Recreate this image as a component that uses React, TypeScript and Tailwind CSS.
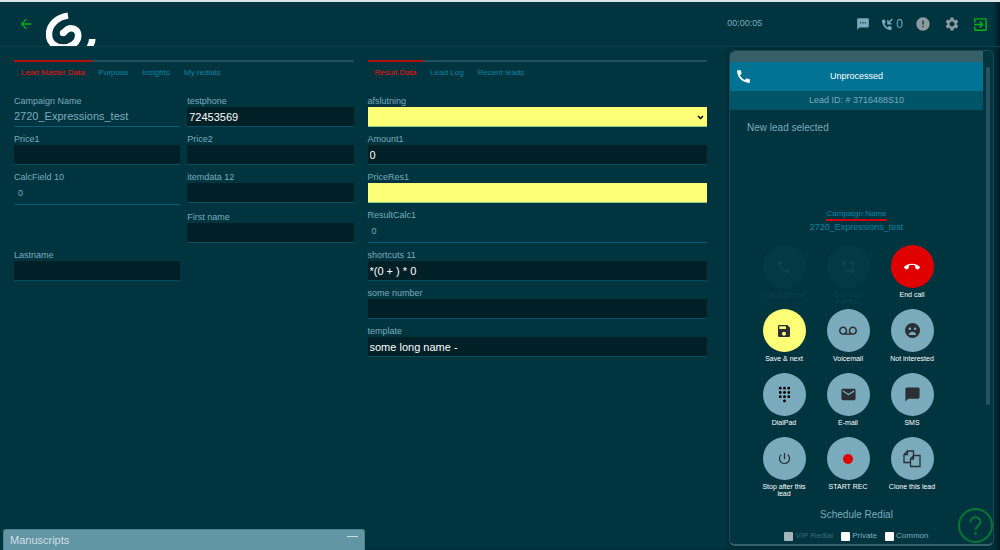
import type { ReactNode } from 'react'
import {
  MdArrowBack, MdCall, MdCallEnd, MdChatBubble, MdDialpad, MdEmail, MdError, MdExitToApp,
  MdPhoneForwarded, MdPowerSettingsNew, MdSave, MdSettings, MdTextsms, MdVoicemail,
} from 'react-icons/md'

type FieldProps = {
  id: string
  label: string
  value?: string
  required?: boolean
}

function Logo() {
  return (
    <svg width="52" height="34" viewBox="0 0 52 34" fill="none" stroke="white" strokeWidth="6.5" aria-label="Logo">
      <path d="M22 3.6C11 5 3 13 3 22.500C3 31 9.500 35.500 17 35.500C25.500 35.500 32.200 30.500 32.200 23.500C32.200 19 29 16.200 25 16.200C20.500 16.200 19.500 19.500 17.200 21" />
      <circle cx="17" cy="21" r="3.2" fill="white" stroke="none" />
      <path d="M43 27H49.500C49.500 30 48.500 32.500 47 35H40C41.800 32 42.800 30 43 27Z" fill="white" stroke="none" />
    </svg>
  )
}

function IncomingCallIcon() {
  return (
    <svg width="12" height="13" viewBox="0 0 24 24" fill="currentColor" preserveAspectRatio="none">
      <path d="M20 15.500c-1.250 0-2.450-.2-3.570-.57-.35-.11-.74-.03-1.020.24l-2.200 2.200c-2.830-1.440-5.150-3.750-6.590-6.590l2.200-2.210c.28-.26.36-.65.25-1C8.700 6.450 8.500 5.250 8.500 4c0-.55-.45-1-1-1H3c-.55 0-1 .45-1 1 0 9.940 8.060 18 18 18 .55 0 1-.45 1-1v-4.500c0-.55-.45-1-1-1z" />
      <path d="M21.500 1L23.500 3L17.200 9.300H21V12H12.500V3.500H15.200V7.300Z" />
    </svg>
  )
}

function SadFaceIcon() {
  return (
    <svg width="15" height="15" viewBox="0 0 20 20" fill="currentColor">
      <path
        fillRule="evenodd"
        d="M10 0A10 10 0 1 0 10 20A10 10 0 1 0 10 0ZM6.500 6A1.700 1.700 0 1 1 6.500 9.400A1.700 1.700 0 1 1 6.500 6ZM13.500 6A1.700 1.700 0 1 1 13.500 9.400A1.700 1.700 0 1 1 13.500 6ZM4.900 16C5.700 13.500 7.700 11.800 10 11.800C12.300 11.800 14.300 13.500 15.100 16Z"
      />
    </svg>
  )
}

function CloneIcon() {
  return (
    <svg width="18" height="18" viewBox="0 0 18 18" fill="none" stroke="#2b2f33" strokeWidth="1.3">
      <path d="M7 12.500H1V4.500L4.500 1H10.500V5M4.500 1V4.500H1" />
      <path d="M10.500 5.500H17V16.500H7.500V9L10.500 5.500ZM10.500 5.500V9H7.500" />
    </svg>
  )
}

function Tabs({ items }: { items: string[] }) {
  return (
    <nav className="flex border-t-2 border-[#22505a] text-[8px] leading-[10px]">
      {items.map((item, i) => (
        <button
          key={item}
          className={`-mt-0.5 border-t-2 px-[7px] pt-[6px] pb-[17px] ${
            i === 0 ? 'border-[#b80f10] text-[#f01008]' : 'border-transparent text-[#0084a6]'
          }`}
        >
          {item}
        </button>
      ))}
    </nav>
  )
}

function Field({ id, label, value = '', required }: FieldProps) {
  return (
    <div className="flex flex-col">
      <label htmlFor={id} className="h-3 text-[9px] leading-3">{label}</label>
      <input
        id={id}
        defaultValue={value}
        className={`h-5 w-full border-b px-0.5 text-[11px] text-white outline-none ${
          required ? 'border-[#8cc88c] bg-[#fdff76]' : 'border-[#005066] bg-[#002028]'
        }`}
      />
    </div>
  )
}

function CalcField({ label, value }: { label: string; value: string }) {
  return (
    <div>
      <div className="h-3 text-[9px] leading-3">{label}</div>
      <div className="h-[22px] border-b border-[#005c7a] px-1 text-[9px] leading-5">{value}</div>
    </div>
  )
}

type ActionProps = {
  icon: ReactNode
  label: string
  color?: string
  disabled?: boolean
}

function Action({ icon, label, color = 'bg-[#7aabbd] text-[#2b2f33]', disabled }: ActionProps) {
  return (
    <button
      disabled={disabled}
      className={`flex h-16 w-16 flex-col items-center gap-[3px] ${disabled ? 'text-[#0b414c]' : 'text-white'}`}
    >
      <span className={`flex size-[43px] shrink-0 items-center justify-center rounded-full text-[16px] ${color}`}>
        {icon}
      </span>
      <span className="w-12 text-center text-[7px] leading-[7px]">{label}</span>
    </button>
  )
}

const off = 'bg-[#033943] text-[#0b434e]'

const actions: ActionProps[] = [
  { label: 'Dial lead now', icon: <MdCall />, color: off, disabled: true },
  { label: 'Dial next number', icon: <MdPhoneForwarded />, color: off, disabled: true },
  { label: 'End call', icon: <MdCallEnd />, color: 'bg-[#e00000] text-white' },
  { label: 'Save & next', icon: <MdSave />, color: 'bg-[#fdff76] text-[#2b2f33]' },
  { label: 'Voicemail', icon: <MdVoicemail className="text-[18px]" /> },
  { label: 'Not interested', icon: <SadFaceIcon /> },
  { label: 'DialPad', icon: <MdDialpad className="text-[17px] text-black" /> },
  { label: 'E-mail', icon: <MdEmail className="text-[17px]" /> },
  { label: 'SMS', icon: <MdChatBubble className="text-[17px]" /> },
  { label: 'Stop after this lead', icon: <MdPowerSettingsNew className="text-[15px]" /> },
  { label: 'START REC', icon: <span className="size-[10px] rounded-full bg-[#e00000]" /> },
  { label: 'Clone this lead', icon: <CloneIcon /> },
]

function Header() {
  return (
    <header className="flex h-[47px] items-start border-t-2 border-b border-t-[#dce6e8] border-b-[#0b414c]">
      <button aria-label="Back" className="mt-[14px] ml-[18px] text-[16px] text-[#00b414]">
        <MdArrowBack />
      </button>
      <div className="mt-[10px] ml-3 h-[34px] overflow-hidden">
        <Logo />
      </div>
      <div className="ml-auto flex h-11 items-center text-[#7aabbd]">
        <time className="mr-[94px] text-[9px]">00:00:05</time>
        <button aria-label="Messages" className="text-[14px]"><MdTextsms /></button>
        <button aria-label="Callbacks" className="ml-[11px] flex items-center gap-[3px] text-[12px]">
          <IncomingCallIcon />
          0
        </button>
        <button aria-label="Alerts" className="ml-3 text-[16px] text-[#8c9a9e]"><MdError /></button>
        <button aria-label="Settings" className="ml-[13px] text-[16px] text-[#8c9a9e]"><MdSettings /></button>
        <button aria-label="Log out" className="mr-[11px] ml-3 text-[17px] text-[#00b414]"><MdExitToApp /></button>
      </div>
    </header>
  )
}

function LeadData() {
  return (
    <section className="min-w-0 flex-1 pt-[13px]">
      <Tabs items={['Lead Master Data', 'Purpose', 'Insights', 'My redials']} />
      <div className="grid grid-cols-2 gap-x-[7px] gap-y-1.5">
        <div>
          <div className="h-3 text-[9px] leading-3">Campaign Name</div>
          <div className="h-5 border-b border-[#005c7a] text-[11px] leading-[19px]">2720_Expressions_test</div>
        </div>
        <Field id="testphone" label="testphone" value="72453569" />
        <Field id="price1" label="Price1" />
        <Field id="price2" label="Price2" />
        <CalcField label="CalcField 10" value="0" />
        <Field id="itemdata" label="itemdata 12" />
        <div className="col-start-2"><Field id="first-name" label="First name" /></div>
        <Field id="last-name" label="Lastname" />
      </div>
    </section>
  )
}

function ResultData() {
  return (
    <section className="min-w-0 flex-1 pt-[13px]">
      <Tabs items={['Result Data', 'Lead Log', 'Recent leads']} />
      <div className="flex flex-col gap-1.5">
        <div className="flex flex-col">
          <label htmlFor="afslutning" className="h-3 text-[9px] leading-3">afslutning</label>
          <div className="relative">
            <select
              id="afslutning"
              className="block h-5 w-full appearance-none border-b border-[#8cc88c] bg-[#fdff76] text-[11px] text-black outline-none"
            >
              <option></option>
            </select>
            <svg
              className="pointer-events-none absolute top-2 right-[3px]"
              width="7" height="6" viewBox="0 0 7 6" fill="none" stroke="black" strokeWidth="1.5"
            >
              <path d="M1 1L3.500 3.500L6 1" />
            </svg>
          </div>
        </div>
        <Field id="amount" label="Amount1" value="0" />
        <Field id="price-res" label="PriceRes1" required />
        <CalcField label="ResultCalc1" value="0" />
        <Field id="shortcuts" label="shortcuts 11" value="*(0 + ) * 0" />
        <Field id="some-number" label="some number" />
        <Field id="template" label="template" value="some long name -" />
      </div>
    </section>
  )
}

function Check({ label, disabled }: { label: string; disabled?: boolean }) {
  return (
    <label className={`flex items-center gap-0.5 ${disabled ? 'text-[#37697a]' : ''}`}>
      <input
        type="checkbox"
        disabled={disabled}
        className="size-[9px] appearance-none rounded-[1px] bg-white disabled:bg-[#a5b5ba]"
      />
      {label}
    </label>
  )
}

function CallPanel() {
  return (
    <aside className="mt-[3px] ml-2 flex w-[265px] shrink-0 self-start rounded-md border-x border-t border-b-2 border-x-[#1c4a56] border-t-[#1c4a56] border-b-[#39626d] shadow-[0_0_4px_#001c24]">
      <div className="min-w-0 flex-1">
        <div className="h-[11px] rounded-tl-md bg-[#365f68]" />
        <div className="relative flex h-[29px] items-center justify-center bg-[#007394] text-[9px] text-white">
          <MdCall className="absolute left-[5px] text-[17px]" />
          Unprocessed
        </div>
        <div className="flex h-[19px] items-center justify-center bg-[#005468] text-[9px]">
          Lead ID: # 3716488S10
        </div>
        <p className="h-[98px] px-[17px] pt-3 text-[10px] leading-3">New lead selected</p>
        <div className="flex h-[37px] flex-col items-center text-[#0084a6]">
          <div className="border-b-2 border-[#d8000c] text-[8px] leading-[11px]">Campaign Name</div>
          <div className="text-[9px] leading-[13px]">2720_Expressions_test</div>
        </div>
        <div className="ml-[22px] grid w-48 grid-cols-3">
          {actions.map(a => <Action key={a.label} {...a} />)}
        </div>
        <h3 className="pt-2 text-center text-[10px] leading-3">Schedule Redial</h3>
        <div className="flex justify-center gap-2 pt-[9px] pb-0.5 text-[8px] leading-[12px]">
          <Check label="VIP Redial" disabled />
          <Check label="Private" />
          <Check label="Common" />
        </div>
      </div>
      {/* Scroll track */}
      <div className="w-[10px] pt-4 pl-[3px]">
        <div className="h-[338px] w-1 rounded-full bg-[#28525f]" />
      </div>
    </aside>
  )
}

export default function App() {
  return (
    <div className="min-h-screen bg-[#003540] font-['Liberation_Sans',Arial,sans-serif] text-[#7aabbd] shadow-[inset_-5px_0_5px_-2px_#001820]">
      <Header />
      <main className="flex gap-[14px] pr-[6px] pl-[14px]">
        <LeadData />
        <ResultData />
        <CallPanel />
      </main>
      <footer className="fixed bottom-0 left-[3px] flex h-[21px] w-[362px] items-center justify-between rounded-t-[3px] border border-b-0 border-[#4d8492] bg-[#6396a4] px-1.5 text-[11px] text-[#d0dfe3]">
        Manuscripts
        <button aria-label="Minimize" className="flex h-3 w-[11px] items-start pt-0.5">
          <span className="h-px w-full bg-[#d0dfe3]" />
        </button>
      </footer>
      <button
        aria-label="Help"
        className="fixed right-[7px] bottom-[7px] flex size-[35px] items-center justify-center rounded-full border-2 border-[#007a30] text-[#007a30]"
      >
        <svg width="13" height="20" viewBox="0 0 14 22" fill="none" stroke="currentColor" strokeWidth="2.2">
          <path d="M1.500 7C1.500 3.500 4 1.500 7 1.500C10 1.500 12.500 3.500 12.500 6.500C12.500 10.500 7 10.500 7 15.500" />
          <circle cx="7" cy="19.500" r="1.500" fill="currentColor" stroke="none" />
        </svg>
      </button>
    </div>
  )
}
